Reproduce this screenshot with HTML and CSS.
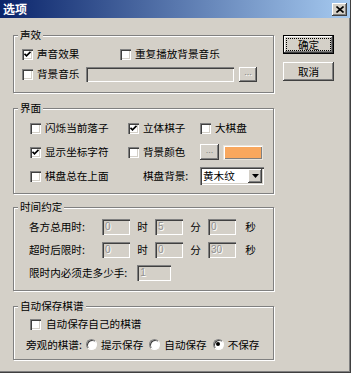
FILE: index.html
```html
<!DOCTYPE html>
<html lang="zh-CN">
<head>
<meta charset="utf-8">
<title>选项</title>
<link rel="stylesheet" href="styles.css">
</head>
<body>
<div class="window">
  <div class="titlebar">
    <span class="title">选项</span>
    <span class="close"><svg width="8" height="7" viewBox="0 0 8 7"><path d="M0.5 0.5 L7.5 6.5 M7.5 0.5 L0.5 6.5" stroke="#000" stroke-width="1.6"/></svg></span>
  </div>
  <div class="content">
    <div class="groups">
      <fieldset class="group g-sound">
        <legend>声效</legend>
        <div class="row">
          <label class="check w98"><span class="box checked"><svg width="7" height="7" viewBox="0 0 7 7"><polyline points="0.5,2.8 2.5,4.8 6.5,0.8" fill="none" stroke="#000" stroke-width="1.7"/></svg></span>声音效果</label>
          <label class="check"><span class="box"></span>重复播放背景音乐</label>
        </div>
        <div class="row">
          <label class="check w64"><span class="box"></span>背景音乐</label>
          <span class="field path"></span>
          <span class="btn dots disabled">...</span>
        </div>
      </fieldset>

      <fieldset class="group g-ui">
        <legend>界面</legend>
        <div class="ui-grid">
          <label class="check"><span class="box"></span>闪烁当前落子</label>
          <label class="check"><span class="box checked"><svg width="7" height="7" viewBox="0 0 7 7"><polyline points="0.5,2.8 2.5,4.8 6.5,0.8" fill="none" stroke="#000" stroke-width="1.7"/></svg></span>立体棋子</label>
          <label class="check"><span class="box"></span>大棋盘</label>

          <label class="check"><span class="box checked"><svg width="7" height="7" viewBox="0 0 7 7"><polyline points="0.5,2.8 2.5,4.8 6.5,0.8" fill="none" stroke="#000" stroke-width="1.7"/></svg></span>显示坐标字符</label>
          <label class="check"><span class="box"></span>背景颜色</label>
          <div class="color-pick">
            <span class="btn dots pick">...</span>
            <span class="swatch"></span>
          </div>

          <label class="check"><span class="box"></span>棋盘总在上面</label>
          <span class="bg-label">棋盘背景:</span>
          <div class="select">
            <span class="select-text">黄木纹</span>
            <span class="select-btn"><svg width="7" height="4" viewBox="0 0 7 4"><path d="M0 0 H7 L3.5 4 Z" fill="#000"/></svg></span>
          </div>
        </div>
      </fieldset>

      <fieldset class="group g-time">
        <legend>时间约定</legend>
        <div class="time-grid">
          <span class="lbl">各方总用时:</span>
          <span class="field num">0</span>
          <span class="unit">时</span>
          <span class="field num">5</span>
          <span class="unit">分</span>
          <span class="field num">0</span>
          <span class="unit">秒</span>

          <span class="lbl">超时后限时:</span>
          <span class="field num">0</span>
          <span class="unit">时</span>
          <span class="field num">0</span>
          <span class="unit">分</span>
          <span class="field num">30</span>
          <span class="unit">秒</span>

          <div class="moves">
            <span class="lbl">限时内必须走多少手:</span>
            <span class="field num moves-field">1</span>
          </div>
        </div>
      </fieldset>

      <fieldset class="group g-save">
        <legend>自动保存棋谱</legend>
        <div class="row">
          <label class="check"><span class="box"></span>自动保存自己的棋谱</label>
        </div>
        <div class="row radios">
          <span class="radio-label">旁观的棋谱:</span>
          <label class="radio-item"><span class="radio"></span>提示保存</label>
          <label class="radio-item"><span class="radio"></span>自动保存</label>
          <label class="radio-item"><span class="radio on"></span>不保存</label>
        </div>
      </fieldset>
    </div>

    <div class="buttons">
      <span class="btn push default"><span class="focus">确定</span></span>
      <span class="btn push">取消</span>
    </div>
  </div>
</div>
</body>
</html>
```
FILE: styles.css
```css
* { box-sizing: border-box; }
html, body { margin: 0; padding: 0; }
body {
  width: 351px;
  height: 373px;
  overflow: hidden;
  background: #d4d0c8;
  font-family: "Noto Sans CJK SC", "Liberation Sans", sans-serif;
  font-size: 10.6px;
  color: #000;
}
.window {
  width: 351px;
  height: 373px;
  display: flex;
  flex-direction: column;
  border-right: 1px solid #404040;
  border-bottom: 1px solid #404040;
  box-shadow: inset -1px -1px 0 #808080;
}
.titlebar {
  height: 18px;
  flex: none;
  display: flex;
  align-items: center;
  padding: 0 3px 0 3px;
  background: linear-gradient(to right, #0a246a, #a6caf0);
}
.title {
  color: #fff;
  font-weight: bold;
  font-size: 12px;
  line-height: 14px;
}
.close {
  margin-left: auto;
  width: 15px;
  height: 13px;
  display: flex;
  align-items: center;
  justify-content: center;
  background: #d4d0c8;
  box-shadow: inset -1px -1px 0 #404040, inset 1px 1px 0 #fff, inset -2px -2px 0 #808080;
}
.content {
  display: flex;
  align-items: flex-start;
  padding-left: 13px;
}
.groups {
  width: 261px;
  display: flex;
  flex-direction: column;
}
.group {
  margin: 0;
  min-inline-size: 0;
  width: 261px;
  border: 1px solid #808080;
  box-shadow: 1px 1px 0 #fff, inset 1px 1px 0 #fff;
}
.group legend {
  padding: 0 2px;
  line-height: 12px;
  height: 12px;
  background: #d4d0c8;
}
.row {
  display: flex;
  align-items: center;
  height: 16px;
}
.check {
  display: flex;
  align-items: center;
  white-space: nowrap;
  line-height: 16px;
}
.box {
  width: 11px;
  height: 11px;
  flex: none;
  margin-right: 4px;
  display: flex;
  align-items: center;
  justify-content: center;
  background: #fff;
  box-shadow: inset 1px 1px 0 #808080, inset 2px 2px 0 #404040, inset -1px -1px 0 #fff, inset -2px -2px 0 #d4d0c8;
}
.w98 { width: 98px; }
.w64 { width: 64px; }

.field {
  display: block;
  background: #d4d0c8;
  box-shadow: inset 1px 1px 0 #808080, inset 2px 2px 0 #404040, inset -1px -1px 0 #fff, inset -2px -2px 0 #d4d0c8;
}
.btn {
  display: flex;
  align-items: center;
  justify-content: center;
  background: #d4d0c8;
  box-shadow: inset -1px -1px 0 #404040, inset 1px 1px 0 #fff, inset -2px -2px 0 #808080, inset 2px 2px 0 #d4d0c8;
}

/* Group 1 */
.g-sound {
  margin-top: 11px;
  padding: 5px 8px 10px 8px;
}
.g-sound legend { margin-left: -4px; }
.g-sound .row + .row { margin-top: 4px; }
.path { width: 148px; height: 15px; }
.dots {
  width: 18px;
  height: 15px;
  margin-left: 5px;
  font-family: "Liberation Sans", sans-serif;
  font-size: 9px;
  line-height: 9px;
  padding-bottom: 3px;
  color: #000;
}
.dots.disabled { color: #808080; text-shadow: 1px 1px 0 #fff; }

/* Group 2 */
.g-ui {
  margin-top: 9px;
  padding: 5px 8px 8px 16px;
}
.g-ui legend { margin-left: -12px; }
.ui-grid {
  display: grid;
  grid-template-columns: 98px 72px auto;
  grid-auto-rows: 18px;
  row-gap: 6px;
  align-items: center;
}
.color-pick {
  display: flex;
  align-items: center;
}
.dots.pick { margin-left: 0; width: 19px; height: 16px; color: #808080; }
.swatch {
  width: 40px;
  height: 15px;
  margin-left: 4px;
  background: #f8a75e;
  box-shadow: inset 1px 1px 0 #fff, inset -1px -1px 0 #808080;
  border: 1px solid #e8e4dc;
}
.bg-label {
  margin-left: 15px;
  white-space: nowrap;
  line-height: 16px;
}
.select {
  width: 64px;
  height: 18px;
  display: flex;
  align-items: center;
  background: #fff;
  padding: 2px;
  box-shadow: inset 1px 1px 0 #808080, inset 2px 2px 0 #404040, inset -1px -1px 0 #fff, inset -2px -2px 0 #d4d0c8;
}
.select-text {
  flex: 1;
  padding-left: 1px;
  line-height: 14px;
}
.select-btn {
  width: 14px;
  height: 14px;
  display: flex;
  align-items: center;
  justify-content: center;
  background: #d4d0c8;
  box-shadow: inset -1px -1px 0 #404040, inset 1px 1px 0 #fff, inset -2px -2px 0 #808080;
}

/* Group 3 */
.g-time {
  margin-top: 7px;
  padding: 6px 8px 9px 15px;
}
.g-time legend { margin-left: -11px; }
.time-grid {
  display: grid;
  grid-template-columns: 73px 28px 25px 28px 25px 28px auto;
  grid-auto-rows: 16px;
  row-gap: 7px;
  align-items: center;
}
.lbl { white-space: nowrap; line-height: 16px; }
.unit { justify-self: center; line-height: 16px; }
.field.num {
  height: 16px;
  padding-left: 3px;
  font-family: "Liberation Sans", sans-serif;
  font-size: 10px;
  line-height: 16px;
  color: #909090;
  text-shadow: 1px 1px 0 #fff;
}
.moves {
  grid-column: 1 / -1;
  display: flex;
  align-items: center;
  margin-top: -1px;
}
.moves-field { width: 34px; margin-left: 10px; }

/* Group 4 */
.g-save {
  margin-top: 9px;
  padding: 4px 8px 7px 16px;
}
.g-save legend { margin-left: -12px; }
.g-save .row + .row { margin-top: 4px; }
.g-save .check .box { margin-right: 5px; }
.radio-label { margin-left: -4px; margin-right: 4px; white-space: nowrap; }
.radio-item {
  display: flex;
  align-items: center;
  white-space: nowrap;
  margin-right: 6px;
}
.radio {
  width: 11px;
  height: 11px;
  flex: none;
  margin-right: 4px;
  border-radius: 50%;
  background: #fff;
  border: 1px solid;
  border-color: #808080 #fff #fff #808080;
  box-shadow: inset 1px 1px 0 #404040;
  display: flex;
  align-items: center;
  justify-content: center;
}
.radio.on::after {
  content: "";
  width: 4px;
  height: 4px;
  border-radius: 50%;
  background: #000;
}

/* Right buttons */
.buttons {
  margin-left: 9px;
  margin-top: 17px;
  display: flex;
  flex-direction: column;
  gap: 8px;
}
.btn.push {
  width: 51px;
  height: 19px;
  line-height: 14px;
}
.btn.default {
  border: 1px solid #000;
  padding: 2px;
}
.focus {
  width: 100%;
  height: 100%;
  display: flex;
  align-items: center;
  justify-content: center;
  outline: 1px dotted #000;
  outline-offset: -1px;
}
```
